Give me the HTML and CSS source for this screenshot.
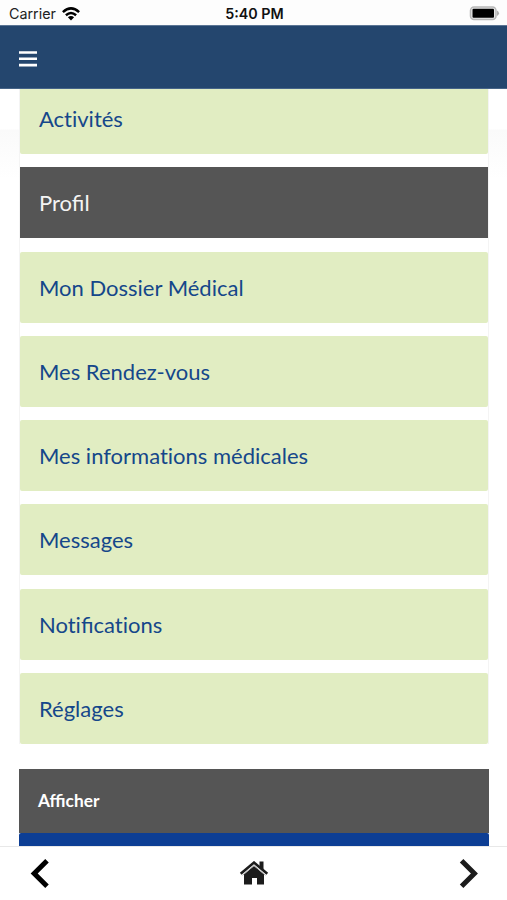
FILE: index.html
```html
<!DOCTYPE html>
<html lang="fr">
<head>
  <meta charset="UTF-8">
  <meta name="viewport" content="width=device-width, initial-scale=1.0">
  <title>Profil</title>
  <link rel="stylesheet" href="styles.css">
</head>
<body>
  <div class="status">
    <div class="carrier">
      <span>Carrier</span>
      <svg width="18" height="14" viewBox="0 0 18 14">
        <g fill="none" stroke="#000" stroke-width="2.5">
          <path d="M.9 5.1Q9-2.3 17.1 5.1"/>
          <path d="M3.9 8.2Q9 3.7 14.1 8.2"/>
        </g>
        <path d="M5.9 10.3Q9 7.8 12.1 10.3L9 13.5Z"/>
      </svg>
    </div>
    <span class="time">5:40 PM</span>
    <svg class="battery" width="31" height="15" viewBox="0 0 31 15">
      <rect x="1.5" y="1" width="25.5" height="12.5" rx="3.5" fill="#e8e8e8" stroke="#b8b8b8" stroke-width="1.5"/>
      <rect x="3.5" y="2.8" width="21.5" height="9" rx="1" fill="#000"/>
      <path d="M28 4.5Q32 7.2 28 10Z" fill="#b0b0b0"/>
    </svg>
  </div>

  <header>
    <button class="menu-btn" aria-label="Menu">
      <svg width="18" height="16" viewBox="0 0 18 16">
        <path d="M0 1.5h18M0 7.8h18M0 14.1h18" stroke="#fff" stroke-width="2.6"/>
      </svg>
    </button>
  </header>

  <main>
    <ul class="menu">
      <li><a href="#">Act&zwnj;ivités</a></li>
      <li class="active"><a href="#">Profil</a></li>
      <li><a href="#">Mon Dossier Médical</a></li>
      <li><a href="#">Mes Rendez-vous</a></li>
      <li><a href="#">Mes informat&zwnj;ions médicales</a></li>
      <li><a href="#">Messages</a></li>
      <li><a href="#">Not&zwnj;ificat&zwnj;ions</a></li>
      <li><a href="#">Réglages</a></li>
    </ul>
    <div class="panel">
      <div class="panel-title">Afficher</div>
      <div class="panel-body"></div>
    </div>
  </main>

  <nav class="toolbar">
    <a href="#" aria-label="Retour">
      <svg width="19" height="30" viewBox="0 0 19 30">
        <path d="M17 1.8L4.2 14.5L17 27.2" fill="none" stroke="#000" stroke-width="5"/>
      </svg>
    </a>
    <a href="#" aria-label="Accueil">
      <svg width="30" height="25" viewBox="0 0 30 25">
        <path d="M5 13.2L15 5L25 13.2V23.5H18V17H13V23.5H5Z" fill="#1c1c1c"/>
        <path d="M20.5 .5H24.5V9L20.5 5.5Z" fill="#1c1c1c"/>
        <path d="M1.7 12.8L15 1.6L28.3 12.8" fill="none" stroke="#1c1c1c" stroke-width="2.6"/>
        <path d="M3.5 14.3L15 4.5L26.5 14.3" fill="none" stroke="#b0b0b0" stroke-width="1"/>
      </svg>
    </a>
    <a href="#" aria-label="Suivant">
      <svg width="19" height="30" viewBox="0 0 19 30">
        <path d="M2.6 1.8L15.4 14.5L2.6 27.2" fill="none" stroke="#1c1c1c" stroke-width="5"/>
      </svg>
    </a>
  </nav>
</body>
</html>
```

FILE: styles.css
```css
* { box-sizing: border-box; }
body { margin: 0; height: 900px; display: flex; flex-direction: column; overflow: hidden; background: #fff; font-family: Lato, sans-serif; }
a { text-decoration: none; }
svg { display: block; }

.status { flex: none; display: grid; grid-template-columns: 1fr auto 1fr; align-items: center; height: 25px; padding: 2px 7px 0 9px; background: #fdfdfd; font-family: Inter, sans-serif; font-size: 14.3px; line-height: 18px; color: #222; }
.carrier { display: flex; align-items: center; gap: 6px; }
.time { font-weight: 600; color: #111; }
.battery { justify-self: end; }

header { flex: none; display: flex; align-items: center; height: 64px; padding: 3px 19px 0; background: #24466e; border-top: 1px solid #5b7594; border-bottom: 1px solid #466488; }
.menu-btn { padding: 0; border: 0; background: none; }

main { flex: 1; min-height: 0; overflow: hidden; padding: 0 18px 0 19px; background: linear-gradient(#fff 40px, #fafafa 41px, #fff 90px); }
.menu { list-style: none; margin: -6px 0 0; padding: 0; border: solid #f4f4f4; border-width: 0 1px; display: flex; flex-direction: column; gap: 13.3px; background: #fff; }
.menu li { height: 71px; border-radius: 2px; background: #e1edc2; }
.menu a { display: block; padding-left: 19px; line-height: 71px; font-size: 22px; color: #15478a; }
.menu .active { border-radius: 0; background: #555; }
.menu .active a { color: #f4f4f4; }

.panel { margin-top: 25px; }
.panel-title { height: 64px; padding-left: 19px; line-height: 64px; background: #555; color: #fff; font-size: 17.3px; font-weight: bold; }
.panel-body { height: 60px; border-radius: 2px; background: #0d3e94; }

.toolbar { flex: none; display: flex; justify-content: space-between; align-items: center; height: 54px; padding: 0 29px 0 30px; border-top: 1px solid #e8e8e8; background: #fff; }
```
